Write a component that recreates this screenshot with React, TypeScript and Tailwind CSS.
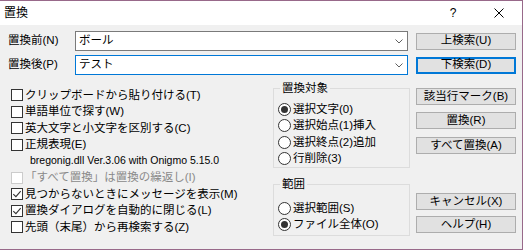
import React from 'react';

const Check = ({ label, checked, disabled }: { label: string; checked?: boolean; disabled?: boolean }) => (
  <div className="flex items-center h-[16.5px]">
    <span
      className={`w-[12px] h-[12px] border bg-white flex items-center justify-center ${
        disabled ? 'border-[#cccccc]' : 'border-[#333333]'
      }`}
    >
      {checked && (
        <svg width="10" height="10" viewBox="0 0 10 10">
          <path d="M1.3 5.1 L3.9 7.7 L8.7 2.1" fill="none" stroke="#333333" strokeWidth="1.1" />
        </svg>
      )}
    </span>
    <span className={`ml-[2px] whitespace-nowrap ${disabled ? 'text-[#8a8a8a]' : 'text-black'}`}>{label}</span>
  </div>
);

const Radio = ({ label, checked }: { label: string; checked?: boolean }) => (
  <div className="flex items-center h-[16.5px]">
    <span className="w-[13px] h-[13px] rounded-full border border-[#333333] bg-white flex items-center justify-center">
      {checked && <span className="w-[7px] h-[7px] rounded-full bg-[#333333]" />}
    </span>
    <span className="ml-[2px] whitespace-nowrap">{label}</span>
  </div>
);

const Btn = ({ label, isDefault, className = '' }: { label: string; isDefault?: boolean; className?: string }) => (
  <button
    className={`w-[100px] h-[17px] bg-[#e1e1e1] flex items-center justify-center leading-none whitespace-nowrap ${
      isDefault ? 'border-2 border-[#0078d7]' : 'border border-[#adadad]'
    } ${className}`}
  >
    {label}
  </button>
);

const Combo = ({ value, focused }: { value: string; focused?: boolean }) => (
  <div
    className={`w-[333px] h-[20px] bg-white border flex items-center ${
      focused ? 'border-[#0078d7]' : 'border-[#7a7a7a]'
    }`}
  >
    <span className="pl-[3px] flex-1">{value}</span>
    <svg width="8" height="5" viewBox="0 0 8 5" className="mr-[4px]">
      <path d="M0.5 0.5 L4 4 L7.5 0.5" fill="none" stroke="#606060" strokeWidth="1" />
    </svg>
  </div>
);

const App: React.FC = () => {
  return (
    <div className="w-[523px] h-[252px] bg-white font-['Liberation_Sans','Noto_Sans_CJK_JP',sans-serif] text-[11.5px] text-black">
      <div className="w-[523px] h-[250px] border-t border-r border-b border-[#98698a] bg-[#f0f0f0] flex flex-col">
        {/* title bar */}
        <div className="h-[24px] bg-white flex items-center shrink-0">
          <span className="ml-[4px] text-[12px]">置換</span>
          <div className="ml-auto flex items-center">
            <span className="w-[46px] text-center text-[12px]">?</span>
            <span className="w-[46px] flex justify-center">
              <svg width="10" height="10" viewBox="0 0 10 10">
                <path d="M0.5 0.5 L9.5 9.5 M9.5 0.5 L0.5 9.5" stroke="#000" strokeWidth="1" />
              </svg>
            </span>
          </div>
        </div>

        {/* body */}
        <div className="flex flex-col pt-[6px]">
          <div className="flex items-center h-[20px]">
            <span className="w-[75px] pl-[8px]">置換前(N)</span>
            <Combo value="ボール" />
            <Btn label="上検索(U)" className="ml-[8px]" />
          </div>
          <div className="flex items-center h-[20px] mt-[4px]">
            <span className="w-[75px] pl-[8px]">置換後(P)</span>
            <Combo value="テスト" focused />
            <Btn label="下検索(D)" isDefault className="ml-[8px]" />
          </div>

          <div className="flex">
            <div className="w-[273px] pl-[11px] pt-[12px]">
              <Check label="クリップボードから貼り付ける(T)" />
              <Check label="単語単位で探す(W)" />
              <Check label="英大文字と小文字を区別する(C)" />
              <Check label="正規表現(E)" />
              <div className="h-[16.5px] flex items-center pl-[19px] text-[10.5px]">
                bregonig.dll Ver.3.06 with Onigmo 5.15.0
              </div>
              <Check label="「すべて置換」は置換の繰返し(I)" disabled />
              <Check label="見つからないときにメッセージを表示(M)" checked />
              <Check label="置換ダイアログを自動的に閉じる(L)" checked />
              <Check label="先頭（末尾）から再検索する(Z)" />
            </div>

            <div className="w-[137px] flex flex-col">
              <fieldset className="mt-[6px] border border-[#dcdcdc] pl-[4px] pt-[6px]">
                <legend className="ml-[2px] px-[2px] leading-[14px]">置換対象</legend>
                <Radio label="選択文字(0)" checked />
                <Radio label="選択始点(1)挿入" />
                <Radio label="選択終点(2)追加" />
                <Radio label="行削除(3)" />
              </fieldset>
              <fieldset className="mt-[9px] border border-[#dcdcdc] pl-[4px] pt-[9px] pb-[2px]">
                <legend className="ml-[2px] px-[2px] leading-[14px]">範囲</legend>
                <Radio label="選択範囲(S)" />
                <Radio label="ファイル全体(O)" checked />
              </fieldset>
            </div>

            <div className="ml-[6px] w-[100px] flex flex-col">
              <Btn label="該当行マーク(B)" className="mt-[13px]" />
              <Btn label="置換(R)" className="mt-[7px]" />
              <Btn label="すべて置換(A)" className="mt-[8px]" />
              <Btn label="キャンセル(X)" className="mt-[39px]" />
              <Btn label="ヘルプ(H)" className="mt-[6px]" />
            </div>
          </div>
        </div>
      </div>
    </div>
  );
};

export default App;
